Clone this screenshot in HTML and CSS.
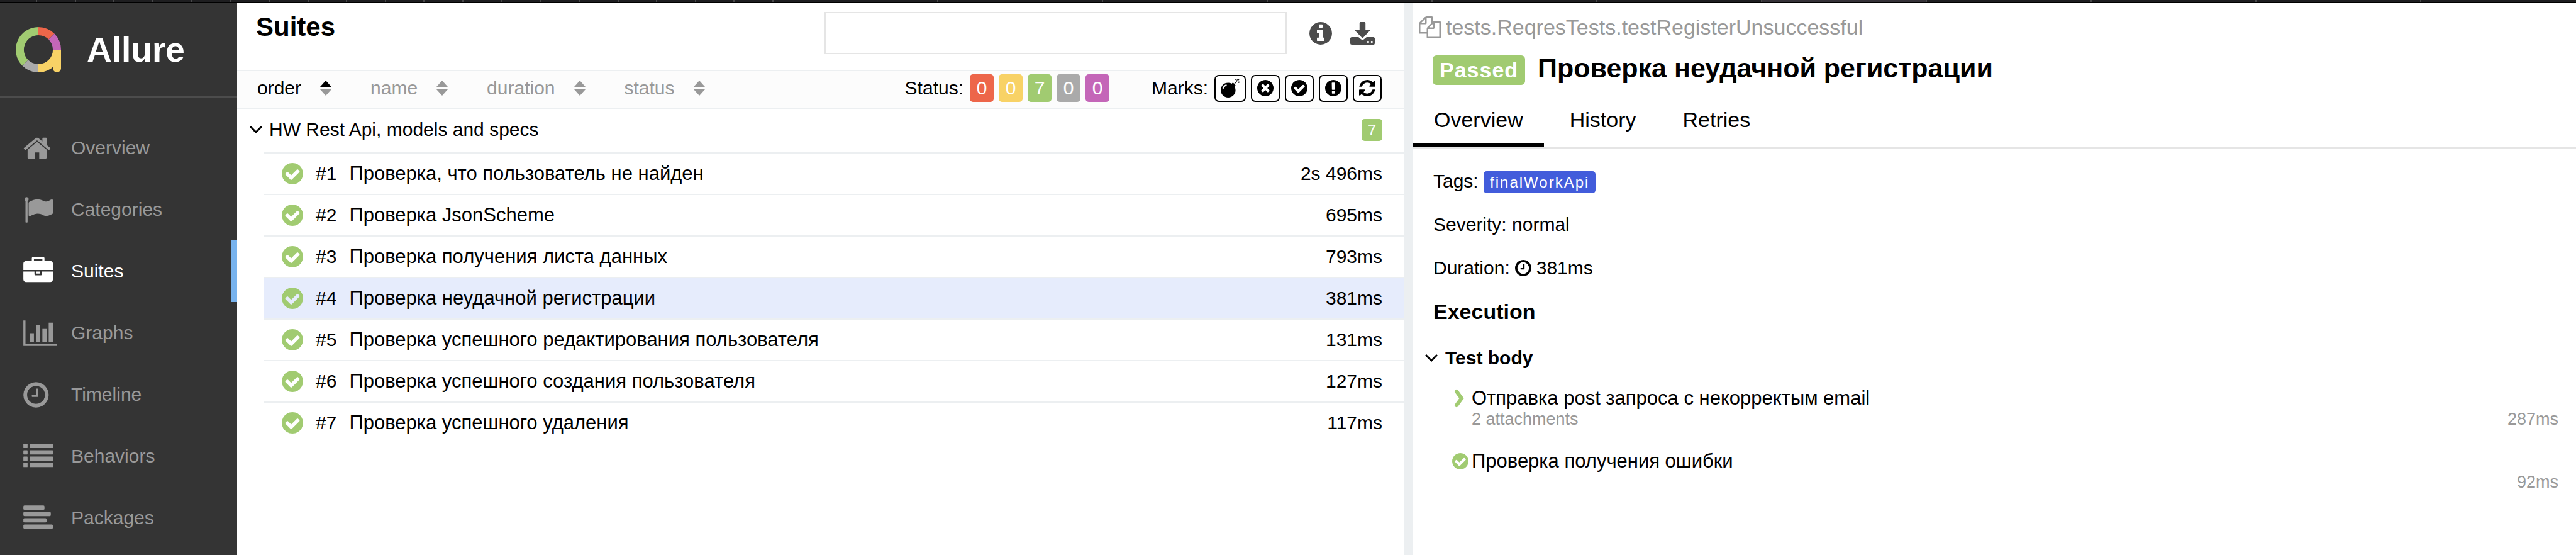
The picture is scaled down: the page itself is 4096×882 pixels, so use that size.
FILE: index.html
```html
<!DOCTYPE html>
<html lang="en">
<head>
<meta charset="utf-8">
<title>Allure Report</title>
<link rel="stylesheet" href="styles.css">
</head>
<body>
<svg class="sprite" aria-hidden="true">
  <symbol id="home" viewBox="64 0 2048 1792"><path d="M1472 992v480q0 26-19 45t-45 19h-384v-384h-256v384h-384q-26 0-45-19t-19-45v-480q0-1 .5-3t.5-3l575-474 575 474q1 2 1 6zm223-69l-62 74q-8 9-21 11h-3q-13 0-21-7l-692-577-692 577q-12 8-24 7-13-2-21-11l-62-74q-8-10-7-23.5t11-21.5l719-599q32-26 76-26t76 26l244 204v-195q0-14 9-23t23-9h192q14 0 23 9t9 23v408l219 182q10 8 11 21.5t-7 23.5z"/></symbol>
  <symbol id="flag" viewBox="0 0 2048 1792"><path d="M320 256q0 72-64 110v1266q0 13-9.5 22.5t-22.5 9.5h-64q-13 0-22.5-9.5t-9.5-22.5v-1266q-64-38-64-110 0-53 37.5-90.5t90.5-37.5 90.5 37.5 37.5 90.5zm1472 64v763q0 25-12.5 38.5t-39.5 27.5q-215 116-369 116-61 0-123.5-22t-108.5-48-115.5-48-142.5-22q-192 0-464 146-17 9-33 9-26 0-45-19t-19-45v-742q0-32 31-55 21-14 79-43 236-120 421-120 107 0 200 29t219 88q38 19 88 19 54 0 117.5-21t110-47 88-47 54.5-21q26 0 45 19t19 45z"/></symbol>
  <symbol id="briefcase" viewBox="0 0 2048 1792"><path d="M640 256h512v-128h-512v128zm1152 640v480q0 66-47 113t-113 47h-1472q-66 0-113-47t-47-113v-480h672v160q0 26 19 45t45 19h320q26 0 45-19t19-45v-160h672zm-768 0v128h-256v-128h256zm768-480v384h-1792v-384q0-66 47-113t113-47h352v-160q0-40 28-68t68-28h576q40 0 68 28t28 68v160h352q66 0 113 47t47 113z"/></symbol>
  <symbol id="chart" viewBox="0 0 2048 1792"><path d="M640 896v512h-256v-512h256zm384-512v1024h-256v-1024h256zm1024 1152v128h-2048v-1536h128v1408h1920zm-640-896v768h-256v-768h256zm384-384v1152h-256v-1152h256z"/></symbol>
  <symbol id="clock-wide" viewBox="128 0 2048 1792"><path d="M1024 544v448q0 14-9 23t-23 9h-320q-14 0-23-9t-9-23v-64q0-14 9-23t23-9h224v-352q0-14 9-23t23-9h64q14 0 23 9t9 23zm416 352q0-148-73-273t-198-198-273-73-273 73-198 198-73 273 73 273 198 198 273 73 273-73 198-198 73-273zm224 0q0 209-103 385.5t-279.5 279.5-385.5 103-385.5-103-279.5-279.5-103-385.5 103-385.5 279.5-279.5 385.5-103 385.5 103 279.5 279.5 103 385.5z"/></symbol>
  <symbol id="clock" viewBox="128 128 1536 1536"><path d="M1024 544v448q0 14-9 23t-23 9h-320q-14 0-23-9t-9-23v-64q0-14 9-23t23-9h224v-352q0-14 9-23t23-9h64q14 0 23 9t9 23zm416 352q0-148-73-273t-198-198-273-73-273 73-198 198-73 273 73 273 198 198 273 73 273-73 198-198 73-273zm224 0q0 209-103 385.5t-279.5 279.5-385.5 103-385.5-103-279.5-279.5-103-385.5 103-385.5 279.5-279.5 385.5-103 385.5 103 279.5 279.5 103 385.5z"/></symbol>
  <symbol id="list" viewBox="0 0 2048 1792"><rect y="128" width="256" height="256" rx="32"/><rect x="384" y="128" width="1408" height="256" rx="32"/><rect y="512" width="256" height="256" rx="32"/><rect x="384" y="512" width="1408" height="256" rx="32"/><rect y="896" width="256" height="256" rx="32"/><rect x="384" y="896" width="1408" height="256" rx="32"/><rect y="1280" width="256" height="256" rx="32"/><rect x="384" y="1280" width="1408" height="256" rx="32"/></symbol>
  <symbol id="align" viewBox="0 0 2048 1792"><rect y="128" width="1280" height="256" rx="64"/><rect y="512" width="1664" height="256" rx="64"/><rect y="896" width="1408" height="256" rx="64"/><rect y="1280" width="1792" height="256" rx="64"/></symbol>
  <symbol id="check" viewBox="128 128 1536 1536"><path d="M1412 734q0-28-18-46l-91-90q-19-19-45-19t-45 19l-408 407-226-226q-19-19-45-19t-45 19l-91 90q-18 18-18 46 0 27 18 45l362 362q19 19 45 19 27 0 46-19l543-543q18-18 18-45zm252 162q0 209-103 385.5t-279.5 279.5-385.5 103-385.5-103-279.5-279.5-103-385.5 103-385.5 279.5-279.5 385.5-103 385.5 103 279.5 279.5 103 385.5z"/></symbol>
  <symbol id="times" viewBox="128 128 1536 1536"><path d="M1277 1122q0-26-19-45l-181-181 181-181q19-19 19-45 0-27-19-46l-90-90q-19-19-46-19-26 0-45 19l-181 181-181-181q-19-19-45-19-27 0-46 19l-90 90q-19 19-19 46 0 26 19 45l181 181-181 181q-19 19-19 45 0 27 19 46l90 90q19 19 46 19 26 0 45-19l181-181 181 181q19 19 45 19 27 0 46-19l90-90q19-19 19-46zm387-226q0 209-103 385.5t-279.5 279.5-385.5 103-385.5-103-279.5-279.5-103-385.5 103-385.5 279.5-279.5 385.5-103 385.5 103 279.5 279.5 103 385.5z"/></symbol>
  <symbol id="exclaim" viewBox="128 128 1536 1536"><path d="M896 128q209 0 385.5 103t279.5 279.5 103 385.5-103 385.5-279.5 279.5-385.5 103-385.5-103-279.5-279.5-103-385.5 103-385.5 279.5-279.5 385.5-103zm128 1247v-190q0-14-9-23.5t-22-9.5h-192q-13 0-23 10t-10 23v190q0 13 10 23t23 10h192q13 0 22-9.5t9-23.5zm-2-344l18-621q0-12-10-18-10-8-24-8h-220q-14 0-24 8-10 6-10 18l17 621q0 10 10 17.5t24 7.5h185q14 0 23.5-7.5t10.5-17.5z"/></symbol>
  <symbol id="info" viewBox="128 128 1536 1536"><path d="M1152 1376v-160q0-14-9-23t-23-9h-96v-512q0-14-9-23t-23-9h-320q-14 0-23 9t-9 23v160q0 14 9 23t23 9h96v320h-96q-14 0-23 9t-9 23v160q0 14 9 23t23 9h448q14 0 23-9t9-23zm-128-896v-160q0-14-9-23t-23-9h-192q-14 0-23 9t-9 23v160q0 14 9 23t23 9h192q14 0 23-9t9-23zm640 416q0 209-103 385.5t-279.5 279.5-385.5 103-385.5-103-279.5-279.5-103-385.5 103-385.5 279.5-279.5 385.5-103 385.5 103 279.5 279.5 103 385.5z"/></symbol>
  <symbol id="refresh" viewBox="128 128 1536 1536"><path d="M1639 1056q0 5-1 7-64 268-268 434.5t-478 166.5q-146 0-282.5-55t-243.5-157l-129 129q-19 19-45 19t-45-19-19-45v-448q0-26 19-45t45-19h448q26 0 45 19t19 45-19 45l-137 137q71 66 161 102t187 36q134 0 250-65t186-179q11-17 53-117 8-23 30-23h192q13 0 22.5 9.5t9.5 22.5zm25-800v448q0 26-19 45t-45 19h-448q-26 0-45-19t-19-45 19-45l138-138q-148-137-349-137-134 0-250 65t-186 179q-11 17-53 117-8 23-30 23h-199q-13 0-22.5-9.5t-9.5-22.5v-7q65-268 270-434.5t480-166.5q146 0 284 55.5t245 156.5l130-129q19-19 45-19t45 19 19 45z"/></symbol>
  <symbol id="bomb" viewBox="0 0 1792 1792"><path d="M571 589q-10-25-34-35t-49 0q-108 44-191 127t-127 191q-10 25 0 49t35 34q13 5 24 5 42 0 60-40 34-84 98.500-148.500t148.500-98.500q25-11 35-35t0-49zm942-356l46 46-244 243 68 68q19 19 19 45.500t-19 45.500l-64 64q89 161 89 343 0 143-55.500 273.500t-150 225-225 150-273.500 55.500-273.500-55.500-225-150-150-225-55.500-273.500 55.500-273.500 150-225 225-150 273.500-55.500q182 0 343 89l64-64q19-19 45.500-19t45.500 19l68 68zm8-56q-10 10-22 10-13 0-23-10l-91-90q-9-10-9-23t9-23q10-9 23-9t23 9l90 91q10 9 10 22.500t-10 22.500zm230 230q-11 9-23 9t-23-9l-90-91q-10-9-10-22.500t10-22.500q9-10 22.500-10t22.500 10l91 90q9 10 9 23t-9 23zm41-183q0 14-9 23t-23 9h-96q-14 0-23-9t-9-23 9-23 23-9h96q14 0 23 9t9 23zm-192-192v96q0 14-9 23t-23 9-23-9-9-23v-96q0-14 9-23t23-9 23 9 9 23zm151 55l-91 90q-10 10-22 10-13 0-23-10-10-9-10-22.500t10-22.500l90-91q10-9 23-9t23 9q9 10 9 23t-9 23z"/></symbol>
  <symbol id="copy" viewBox="0 0 1792 1792"><path d="M1696 384q40 0 68 28t28 68v1216q0 40-28 68t-68 28h-960q-40 0-68-28t-28-68v-288h-544q-40 0-68-28t-28-68v-672q0-40 20-88t48-76l408-408q28-28 76-48t88-20h416q40 0 68 28t28 68v328q68-40 128-40h416zm-544 213l-299 299h299v-299zm-640-384l-299 299h299v-299zm196 647l316-316v-416h-384v416q0 40-28 68t-68 28h-416v640h512v-256q0-40 20-88t48-76zm956 804v-1152h-384v416q0 40-28 68t-68 28h-416v640h896z"/></symbol>
  <symbol id="download" viewBox="0 0 140 129"><path d="M58 0h24q5 0 5 5v38h22q8 0 3 6l-38 40q-4 4-8 0l-38-40q-5-6 3-6h22V5q0-5 5-5zM9 86h38l14 12q9 8 18 0l14-12h38q9 0 9 9v25q0 9-9 9H9q-9 0-9-9V95q0-9 9-9zm93 21a6 6 0 1 0 0 12 6 6 0 1 0 0-12zm21 0a6 6 0 1 0 0 12 6 6 0 1 0 0-12z"/></symbol>
  <symbol id="down" viewBox="0 0 20 12"><path d="M1 1l9 9 9-9" fill="none" stroke="currentColor" stroke-width="3"/></symbol>
  <symbol id="next" viewBox="0 0 26 28"><path d="M7 3l8 11-8 11" fill="none" stroke="currentColor" stroke-width="6" stroke-linecap="round"/></symbol>
  <symbol id="sort" viewBox="0 0 18 24"><path class="sort-up" d="M0 10L9 0l9 10z"/><path class="sort-down" d="M0 14l9 10 9-10z"/></symbol>
</svg>

<div class="tabstrip" aria-hidden="true">
  <i class="lead"></i>
  <i></i><i></i><i></i><i></i><i></i><i></i><i></i><i></i><i></i><i></i><i></i><i></i><i></i><i></i><i></i><i></i><i></i><i></i><i></i>
  <i class="wide"></i><i class="wide"></i><i class="wide"></i><i class="wide"></i><i class="wide"></i><i class="wide"></i><i class="wide current"></i><i class="wide"></i><i class="wide"></i><i class="wide"></i><i class="tail"></i>
</div>

<div class="app">
  <aside class="sidebar">
    <a class="brand" href="#">
      <svg class="logo" viewBox="0 0 100 100" aria-hidden="true">
        <g fill="none" stroke-width="18">
          <path d="M50 9A41 41 0 0 0 21 79" stroke="#a1cb71"/>
          <path d="M21 79A41 41 0 0 0 50 91" stroke="#aaa"/>
          <path d="M50 9A41 41 0 0 1 79 21" stroke="#ed664a"/>
          <path d="M79 21A41 41 0 0 1 91 50" stroke="#c466b8"/>
          <path d="M91 50A41 41 0 0 1 50 91" stroke="#f8d266"/>
        </g>
        <path d="M82 50h18v41a9 9 0 0 1-18 0z" fill="#f8d266"/>
      </svg>
      <span>Allure</span>
    </a>
    <nav class="nav">
      <a href="#"><svg><use href="#home"/></svg>Overview</a>
      <a href="#"><svg><use href="#flag"/></svg>Categories</a>
      <a href="#" class="active" aria-current="page"><svg><use href="#briefcase"/></svg>Suites</a>
      <a href="#"><svg><use href="#chart"/></svg>Graphs</a>
      <a href="#"><svg><use href="#clock-wide"/></svg>Timeline</a>
      <a href="#"><svg><use href="#list"/></svg>Behaviors</a>
      <a href="#"><svg><use href="#align"/></svg>Packages</a>
    </nav>
  </aside>

  <main class="suites">
    <header class="pane-head">
      <h1>Suites</h1>
      <div class="tools">
        <input class="search" type="text" aria-label="Search">
        <div class="tool-icons">
          <button type="button" aria-label="Information"><svg class="i-info"><use href="#info"/></svg></button>
          <button type="button" aria-label="Download CSV"><svg class="i-download"><use href="#download"/></svg></button>
        </div>
      </div>
    </header>
    <div class="toolbar">
      <div class="sorters">
        <button type="button" class="on">order<svg><use href="#sort"/></svg></button>
        <button type="button">name<svg><use href="#sort"/></svg></button>
        <button type="button">duration<svg><use href="#sort"/></svg></button>
        <button type="button">status<svg><use href="#sort"/></svg></button>
      </div>
      <div class="filters">
        <div class="filter"><span>Status:</span>
          <button type="button" class="count failed">0</button>
          <button type="button" class="count broken">0</button>
          <button type="button" class="count passed">7</button>
          <button type="button" class="count skipped">0</button>
          <button type="button" class="count unknown">0</button>
        </div>
        <div class="filter"><span>Marks:</span>
          <button type="button" class="mark" aria-label="Flaky"><svg class="i-bomb"><use href="#bomb"/></svg></button>
          <button type="button" class="mark" aria-label="New failed"><svg><use href="#times"/></svg></button>
          <button type="button" class="mark" aria-label="New passed"><svg><use href="#check"/></svg></button>
          <button type="button" class="mark" aria-label="New broken"><svg><use href="#exclaim"/></svg></button>
          <button type="button" class="mark" aria-label="Retries"><svg><use href="#refresh"/></svg></button>
        </div>
      </div>
    </div>
    <div class="group"><svg class="i-down"><use href="#down"/></svg><span class="grow">HW Rest Api, models and specs</span><span class="badge passed">7</span></div>
    <div class="rows">
      <a href="#"><svg><use href="#check"/></svg><span>#1</span><span class="grow name">Проверка, что пользователь не найден</span><span>2s 496ms</span></a>
      <a href="#"><svg><use href="#check"/></svg><span>#2</span><span class="grow name">Проверка JsonScheme</span><span>695ms</span></a>
      <a href="#"><svg><use href="#check"/></svg><span>#3</span><span class="grow name">Проверка получения листа данных</span><span>793ms</span></a>
      <a href="#" class="selected"><svg><use href="#check"/></svg><span>#4</span><span class="grow name">Проверка неудачной регистрации</span><span>381ms</span></a>
      <a href="#"><svg><use href="#check"/></svg><span>#5</span><span class="grow name">Проверка успешного редактирования пользователя</span><span>131ms</span></a>
      <a href="#"><svg><use href="#check"/></svg><span>#6</span><span class="grow name">Проверка успешного создания пользователя</span><span>127ms</span></a>
      <a href="#"><svg><use href="#check"/></svg><span>#7</span><span class="grow name">Проверка успешного удаления</span><span>117ms</span></a>
    </div>
  </main>

  <div class="gutter"></div>

  <section class="details">
    <div class="fullname"><svg><use href="#copy"/></svg><span>tests.ReqresTests.testRegisterUnsuccessful</span></div>
    <div class="title"><span class="state passed">Passed</span><h2>Проверка неудачной регистрации</h2></div>
    <nav class="tabs">
      <a href="#" class="active" aria-current="true">Overview</a>
      <a href="#">History</a>
      <a href="#">Retries</a>
    </nav>
    <div class="content">
      <p>Tags: <span class="badge tag">finalWorkApi</span></p>
      <p>Severity: normal</p>
      <p class="with-icon">Duration:<svg><use href="#clock"/></svg>381ms</p>
      <h3>Execution</h3>
      <h4><svg class="i-down"><use href="#down"/></svg>Test body</h4>
      <ul class="steps">
        <li><svg><use href="#next"/></svg>
          <div class="step"><div class="step-name">Отправка post запроса с некорректым email</div>
            <div class="step-meta"><span>2 attachments</span><span>287ms</span></div></div></li>
        <li><svg><use href="#check"/></svg>
          <div class="step"><div class="step-name">Проверка получения ошибки</div>
            <div class="step-meta"><span></span><span>92ms</span></div></div></li>
      </ul>
    </div>
  </section>
</div>
</body>
</html>
```
FILE: styles.css
```css
* { box-sizing: border-box; }

body {
  margin: 0;
  min-height: 100vh;
  display: flex;
  flex-direction: column;
  background: #fff;
  color: #000;
  font: 30px/42px "Liberation Sans", Arial, sans-serif;
}

h1, h2, h3, h4, p, ul { margin: 0; padding: 0; }
a { color: inherit; text-decoration: none; }
button { margin: 0; padding: 0; border: 0; background: none; color: inherit; font: inherit; cursor: pointer; }
svg { display: block; flex: none; fill: currentColor; }
.sprite { position: absolute; width: 0; height: 0; }
.grow { flex: 1; }

.passed { background: #a1cb71; }
.failed { background: #ed664a; }
.broken { background: #f8d266; }
.skipped { background: #aaa; }
.unknown { background: #c466b8; }

/* Browser tab strip */
.tabstrip { display: flex; height: 5px; background: #1e1e20; border-bottom: 1px solid #999; box-shadow: inset 0 -1px #000; }
.tabstrip i { flex: 72 1 0; margin-bottom: 1px; border-left: 2px solid #48484a; }
.tabstrip .lead { flex-grow: 69; border: 0; }
.tabstrip .wide { flex-grow: 314; }
.tabstrip .tail { flex-grow: 297; }
.tabstrip .current { background: #353238; }

.app { flex: 1; display: grid; grid-template-columns: 377px 1855fr 15px 1849fr; }

/* Sidebar */
.sidebar { background: #343434; color: #999; overflow: hidden; }
.brand { display: flex; align-items: center; gap: 41px; height: 150px; padding-left: 25px; border-bottom: 2px solid #4c4c4c; color: #fff; font-size: 55px; font-weight: bold; }
.logo { width: 72px; height: 72px; }
.nav { padding-top: 31px; }
.nav a { display: flex; align-items: center; gap: 22px; height: 98px; padding-left: 37px; }
.nav svg { width: 54px; height: 47px; }
.nav .active { color: #fff; border-right: 9px solid #78b3ee; }

/* Suites pane */
.pane-head { display: flex; justify-content: space-between; height: 108px; padding: 14px 46px 0 30px; border-bottom: 2px solid #eceff1; }
.pane-head h1 { font-size: 42px; line-height: 48px; }
.tools { display: flex; align-items: center; gap: 36px; height: 67px; }
.search { width: 735px; height: 67px; padding: 0 16px; border: 2px solid #e5e5e5; background: #fff; font: inherit; }
.tool-icons { display: flex; align-items: center; gap: 29px; color: #4c4c4c; }
.i-info { width: 36px; height: 36px; }
.i-download { width: 39px; height: 36px; }

.toolbar { display: flex; align-items: center; justify-content: space-between; height: 60px; padding: 0 35px 4px 32px; background: #fcfcfc; border-bottom: 2px solid #eceff1; }
.sorters { display: flex; gap: 62px; color: #999; }
.sorters button { display: flex; align-items: center; gap: 30px; line-height: 40px; }
.sorters svg { width: 18px; height: 24px; }
.sorters .on { color: #000; }
.sort-down { fill: #999; }
.filters { display: flex; gap: 67px; }
.filter { display: flex; align-items: center; gap: 8px; }
.filter span { margin-right: 2px; }
.count { width: 38px; height: 44px; border-radius: 5px; color: #fff; }
.mark { display: flex; align-items: center; height: 43px; padding: 0 8px; border: 2px solid #000; border-radius: 7px; background: #fff; }
.mark svg { width: 26px; height: 26px; }
.mark .i-bomb { width: 30px; height: 30px; }

.group { display: flex; align-items: center; height: 69px; padding: 0 34px 3px 20px; }
.i-down { width: 20px; height: 12px; margin-right: 11px; }
.badge { padding: 0 10px; border-radius: 5px; color: #fff; font-size: 24px; line-height: 35px; }
.rows { margin-left: 42px; }
.rows a { display: flex; align-items: center; gap: 20px; height: 66px; padding: 0 34px 0 29px; border-top: 2px solid #eceff1; }
.rows svg { width: 34px; height: 34px; color: #a1cb71; }
.rows .name { font-size: 31px; }
.rows .selected { background: #e6ecfc; }

.gutter { background: #eceff1; }

/* Details pane */
.fullname { display: flex; align-items: center; gap: 8px; padding: 18px 0 0 9px; color: #999; font-size: 34px; line-height: 40px; }
.fullname svg { width: 35px; height: 35px; }
.title { display: flex; align-items: baseline; gap: 20px; padding: 21px 31px 17px; }
.title h2 { font-size: 43px; line-height: 48px; }
.state { padding: 0 11px; border-radius: 6px; color: #fff; font-size: 34px; font-weight: bold; line-height: 47px; letter-spacing: 1px; }
.tabs { display: flex; gap: 8px; padding-bottom: 1px; border-bottom: 2px solid #e5e5e5; font-size: 34px; }
.tabs a { padding: 17px 33px 16px; border-bottom: 6px solid transparent; }
.tabs .active { border-color: #000; }
.content { padding: 31px 28px 0 32px; }
.content p { margin-bottom: 27px; }
.tag { display: inline-block; background: #425cdb; letter-spacing: 2px; }
.with-icon { display: flex; align-items: center; gap: 8px; }
.with-icon svg { width: 26px; height: 26px; }
.content h3 { font-size: 34px; }
.content h4 { display: flex; align-items: center; margin: 32px 0 10px -13px; font-size: 30px; }
.content h4 .i-down { margin-right: 12px; }
.steps { padding-left: 30px; list-style: none; }
.steps li { display: flex; gap: 5px; padding: 16px 0 17px; }
.steps svg { width: 26px; height: 34px; color: #a1cb71; }
.step { flex: 1; }
.step-name { font-size: 31px; line-height: 34px; }
.step-meta { display: flex; justify-content: space-between; color: #999; font-size: 27px; line-height: 33px; }
```
